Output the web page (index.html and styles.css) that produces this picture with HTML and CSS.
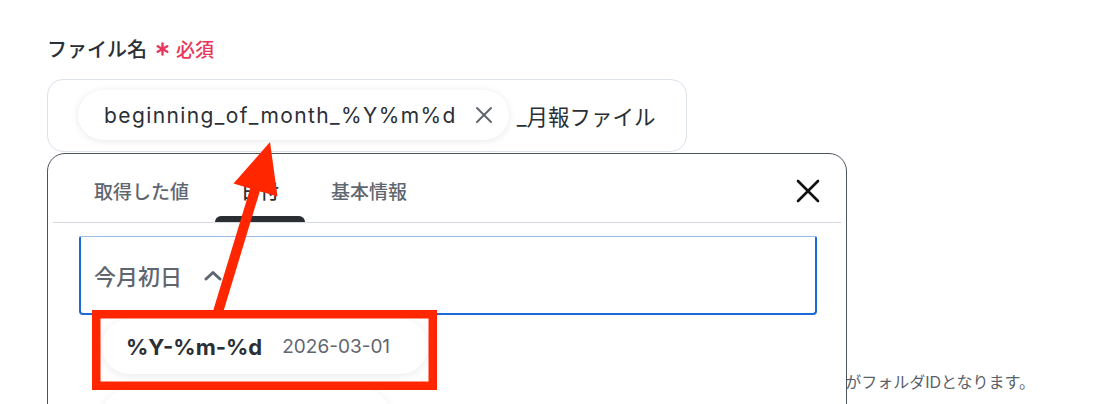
FILE: index.html
```html
<!DOCTYPE html>
<html lang="ja">
<head>
<meta charset="utf-8">
<title>ファイル名</title>
<link rel="stylesheet" href="styles.css">
</head>
<body>
<div class="page">
  <div class="field-label">
    <span class="label-text">ファイル名</span>
    <svg class="req-star" width="13" height="14" viewBox="0 0 13 14"><g stroke="#e8365d" stroke-width="2.4" stroke-linecap="round"><line x1="6.5" y1="1.5" x2="6.5" y2="12.5"/><line x1="1.7" y1="4.2" x2="11.3" y2="9.8"/><line x1="1.7" y1="9.8" x2="11.3" y2="4.2"/></g></svg>
    <span class="req">必須</span>
  </div>
  <div class="input-box">
    <div class="token">
      <span class="token-text">beginning_of_month_%Y%m%d</span>
      <svg class="token-x" width="20" height="20" viewBox="0 0 20 20"><g stroke="#5f6670" stroke-width="2" stroke-linecap="round"><line x1="3" y1="3" x2="17" y2="17"/><line x1="17" y1="3" x2="3" y2="17"/></g></svg>
    </div>
    <span class="input-suffix">_月報ファイル</span>
  </div>
  <p class="help">フォルダのURLの「folders/」以降の部分がフォルダIDとなります。</p>

  <div class="panel">
    <div class="panel-head">
      <div class="tabs">
        <div class="tab">取得した値</div>
        <div class="tab active">日付</div>
        <div class="tab">基本情報</div>
      </div>
      <div class="close">
        <svg width="24" height="24" viewBox="0 0 24 24"><g stroke="#111" stroke-width="2.6" stroke-linecap="round"><line x1="2" y1="2" x2="22" y2="22"/><line x1="22" y1="2" x2="2" y2="22"/></g></svg>
      </div>
    </div>
    <div class="panel-body">
      <div class="select-box">
        <span class="select-text">今月初日</span>
        <svg class="chev" width="18" height="11" viewBox="0 0 18 11"><polyline points="2,9 9,2.5 16,9" fill="none" stroke="#5f6670" stroke-width="3" stroke-linecap="round" stroke-linejoin="round"/></svg>
      </div>
      <div class="options">
        <div class="option"><span class="opt-fmt">%Y-%m-%d</span><span class="opt-val">2026-03-01</span></div>
        <div class="option"><span class="opt-fmt">%Y%m%d</span><span class="opt-val">20260301</span></div>
      </div>
    </div>
  </div>

  <svg class="annot" width="1098" height="404" viewBox="0 0 1098 404">
    <rect x="96.25" y="314.25" width="336.5" height="71.5" fill="none" stroke="#ff2600" stroke-width="8.5"/>
    <line x1="218" y1="312" x2="258" y2="180" stroke="#ff2600" stroke-width="10"/>
    <polygon points="270,142 233.5,183.4 277.5,196.6" fill="#ff2600"/>
  </svg>
</div>
</body>
</html>
```

FILE: styles.css
```css
* { box-sizing: border-box; }

body {
  margin: 0;
  width: 1098px;
  height: 404px;
  overflow: hidden;
  background: #ffffff;
  font-family: Inter, "Noto Sans CJK JP", sans-serif;
  color: #2b2f36;
}

.page {
  position: relative;
  height: 404px;
  padding: 30px 0 0 47px;
}

.field-label {
  display: flex;
  align-items: center;
  height: 36px;
  margin-bottom: 13px;
}

.label-text {
  font-family: "Noto Sans CJK JP", sans-serif;
  font-size: 20px;
  font-weight: 500;
  color: #2b2f36;
}

.req-star {
  margin-left: 9px;
  margin-top: 2px;
}

.req {
  margin-left: 7px;
  font-family: "Noto Sans CJK JP", sans-serif;
  font-size: 19px;
  font-weight: 500;
  color: #e8365d;
}

.input-box {
  width: 640px;
  height: 73px;
  border: 1px solid #dde2ea;
  border-radius: 16px;
  display: flex;
  align-items: center;
  padding-left: 30px;
}

.token {
  display: flex;
  align-items: center;
  height: 50px;
  margin-top: -1px;
  padding: 0 15px 0 26px;
  gap: 17px;
  border-radius: 25px;
  background: #ffffff;
  box-shadow: 0 1px 7px rgba(20, 30, 50, 0.10);
}

.token-text {
  font-size: 21px;
  letter-spacing: 1.4px;
  color: #2b2f36;
}

.token-x { display: block; }

.input-suffix {
  margin-left: 8px;
  font-size: 21.5px;
  color: #2b2f36;
}

.help {
  margin: 218px 0 0 0;
  width: 988px;
  text-align: right;
  font-size: 16px;
  line-height: 24px;
  color: #5a5f68;
  white-space: nowrap;
}

.panel {
  position: absolute;
  left: 47px;
  top: 153px;
  width: 800px;
  height: 400px;
  background: #ffffff;
  border: 1px solid #4d5461;
  border-radius: 18px 18px 0 0;
}

.panel-head {
  display: flex;
  justify-content: space-between;
  align-items: stretch;
  height: 69px;
  margin: 0 5px;
  border-bottom: 1px solid #d5dae3;
}

.tabs {
  display: flex;
  padding-left: 15px;
}

.tab {
  position: relative;
  display: flex;
  align-items: center;
  padding: 4px 26px 0;
  font-family: "Noto Sans CJK JP", sans-serif;
  font-size: 19px;
  font-weight: 500;
  color: #5f6670;
}

.tab.active { color: #2a2e33; }

.tab.active::after {
  content: "";
  position: absolute;
  left: 0;
  right: 0;
  bottom: 0;
  height: 6px;
  border-radius: 6px 6px 0 0;
  background: #2a2e33;
}

.close {
  align-self: center;
  width: 24px;
  height: 24px;
  margin: 6px 21px 0 0;
}

.close svg { display: block; }

.panel-body {
  padding: 13px 29px 0 31px;
}

.select-box {
  height: 79px;
  display: flex;
  align-items: center;
  gap: 22px;
  padding-left: 13px;
  border: 2px solid #1a6ad8;
  border-top: 1px solid #9dbbe9;
  border-radius: 2px 2px 4px 4px;
}

.select-text {
  font-family: "Noto Sans CJK JP", sans-serif;
  font-size: 22px;
  font-weight: 500;
  color: #5f6670;
}

.chev { display: block; }

.options {
  display: flex;
  flex-direction: column;
  align-items: flex-start;
  gap: 15px;
  padding: 4px 0 0 23px;
}

.option {
  display: flex;
  align-items: center;
  gap: 20px;
  height: 55px;
  padding: 0 38px 0 24px;
  border-radius: 28px;
  background: #ffffff;
  box-shadow: 0 2px 8px rgba(20, 30, 50, 0.09);
}

.opt-fmt {
  font-size: 22px;
  font-weight: 700;
  color: #2b2f36;
}

.opt-val {
  font-size: 19px;
  color: #5f6670;
}

.annot {
  position: absolute;
  left: 0;
  top: 0;
  pointer-events: none;
}
```
